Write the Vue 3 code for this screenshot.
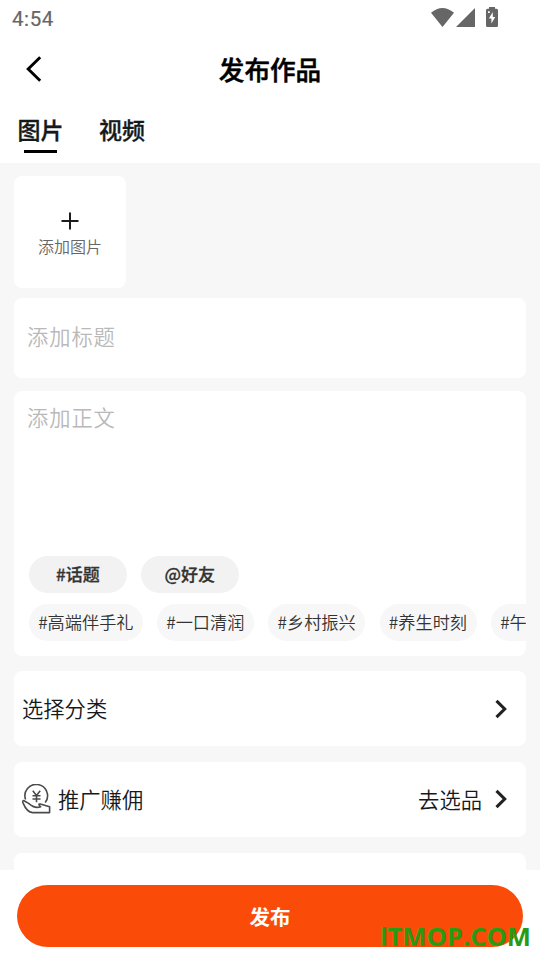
<script setup>
import { ref } from 'vue'

const tabs = ['图片', '视频']
const active = ref(0)
const actions = ['#话题', '@好友']
const topics = ['#高端伴手礼', '#一口清润', '#乡村振兴', '#养生时刻', '#午']
</script>

<template>
  <div class="screen">
    <div class="status">
      <span class="clock">4:54</span>
      <svg class="status-icons" width="70" height="38" viewBox="0 0 70 38">
        <path d="M1 12.800Q12.400 3.400 24 12.800L12.500 27Z" />
        <path d="M45 8V27H26Z" />
        <path fill-rule="evenodd" d="M59 7H65V8.800H66.500Q68 8.800 68 10.300V25.500Q68 27 66.500 27H57.500Q56 27 56 25.500V10.300Q56 8.800 57.500 8.800H59ZM62.800 12L58.900 18.600H61.400V23.500L65.200 17H62.800ZM58 11.200V13H59.800V11.200Z" />
      </svg>
    </div>

    <header class="nav">
      <svg class="back" width="16" height="26" viewBox="0 0 16 26">
        <path d="M14.200 1.200L2.200 13L14.200 24.800" fill="none" stroke="#000" stroke-width="2.900" />
      </svg>
      <h1>发布作品</h1>
    </header>

    <nav class="tabs">
      <button v-for="(t, i) in tabs" :key="t" class="tab" :class="{ active: active === i }" @click="active = i">{{ t }}</button>
    </nav>

    <main class="content">
      <button class="upload">
        <svg width="18" height="18" viewBox="0 0 18 18"><path d="M9 0.500V17.500M0.500 9H17.500" stroke="#1c1c1e" stroke-width="2" /></svg>
        <span>添加图片</span>
      </button>

      <section class="card title-card"><span class="placeholder">添加标题</span></section>

      <section class="card body-card">
        <span class="placeholder">添加正文</span>
        <div class="chips actions">
          <button v-for="a in actions" :key="a" class="chip bold">{{ a }}</button>
        </div>
        <div class="chips">
          <button v-for="t in topics" :key="t" class="chip">{{ t }}</button>
        </div>
      </section>

      <section class="card row">
        <span>选择分类</span>
        <svg class="chevron" width="12" height="20" viewBox="0 0 12 20"><path d="M1.500 1.800L9.700 10L1.500 18.200" fill="none" stroke="#222" stroke-width="3.100" /></svg>
      </section>

      <section class="card row">
        <svg class="coin" width="29" height="30" viewBox="0 0 29 30" fill="none" stroke="#4b4b4b" stroke-width="1.600" stroke-linejoin="round">
          <path d="M3.600 15.600A11.300 11.300 0 1 1 23.200 18.600" />
          <path d="M10.800 6.800L14.500 11.500L18.200 6.800M14.500 11.500V18.200M10.500 11.800H18.500M10.500 15H18.500" />
          <path d="M6.600 19.400L2 16.700C.6 16.200 .5 17.600 1 18.900C3.200 24.200 6 28.400 10.500 28.600H27.600V22.800L18.300 20C16.300 19.600 16.700 21.300 18.600 22.700C14.800 24.300 10 22.400 6.600 19.400Z" />
        </svg>
        <span>推广赚佣</span>
        <span class="select">去选品</span>
        <svg class="chevron" width="12" height="20" viewBox="0 0 12 20"><path d="M1.500 1.800L9.700 10L1.500 18.200" fill="none" stroke="#222" stroke-width="3.100" /></svg>
      </section>

      <section class="card row"></section>
    </main>

    <footer class="footer">
      <button class="publish">发布</button>
      <span class="watermark"><span class="plain">I</span>TMOP.COM</span>
    </footer>
  </div>
</template>

<style>
body {
  margin: 0;
  background: #fff;
}
</style>

<style scoped>
.screen {
  width: 540px;
  height: 960px;
  overflow: hidden;
  display: flex;
  flex-direction: column;
  background: #fff;
  color: #14191c;
  font-family: "Noto Sans CJK SC", sans-serif;
  font-weight: 350;
}
.screen * {
  box-sizing: border-box;
}
button {
  border: 0;
  margin: 0;
  padding: 0;
  color: inherit;
  font: inherit;
}
svg {
  display: block;
  flex: none;
}
.status {
  height: 38px;
  flex: none;
  display: flex;
  justify-content: space-between;
  padding: 0 40px 0 12px;
  color: #666;
}
.clock {
  font: 400 20.500px/38px Roboto, sans-serif;
  letter-spacing: 0.600px;
  -webkit-text-stroke: 0.200px #666;
}
.status-icons {
  fill: #666;
}
.nav {
  height: 62px;
  flex: none;
  display: grid;
  grid-template-columns: 60px 1fr 60px;
  align-items: center;
}
.back {
  margin-left: 26px;
}
h1 {
  margin: 0;
  text-align: center;
  color: #000;
  font-size: 25.6px;
  line-height: 36px;
  font-weight: 500;
  -webkit-text-stroke: 0.500px #000;
}
.tabs {
  height: 63px;
  flex: none;
  display: flex;
  gap: 35.500px;
  padding: 12px 0 0 17.500px;
}
.tab {
  width: 46px;
  height: 42px;
  display: flex;
  flex-direction: column;
  align-items: center;
  background: none;
  font-size: 23px;
  line-height: 34px;
  font-weight: 500;
  -webkit-text-stroke: 0.350px #14191c;
  white-space: nowrap;
}
.tab.active::after {
  content: "";
  width: 33px;
  height: 3px;
  margin-top: 4px;
  background: #000;
}
.content {
  height: 707px;
  flex: none;
  overflow: hidden;
  padding: 13px 14px 0;
  background: #f7f7f7;
}
.upload {
  width: 112px;
  height: 112px;
  display: flex;
  flex-direction: column;
  align-items: center;
  padding-top: 36px;
  border-radius: 8px;
  background: #fff;
  color: #666;
  font-size: 16px;
  line-height: 24px;
}
.upload span {
  margin-top: 4px;
}
.card {
  overflow: hidden;
  border-radius: 8px;
  background: #fff;
}
.title-card {
  height: 79.700px;
  margin-top: 10px;
  padding: 22px 13px;
}
.placeholder {
  display: block;
  color: #b9b9b9;
  font-size: 21.300px;
  line-height: 32px;
  letter-spacing: 0.900px;
}
.body-card {
  height: 265px;
  margin-top: 13px;
  padding: 10px 0 0 13px;
}
.chips {
  display: flex;
  gap: 14.300px;
  margin: 10.700px 0 0 2px;
}
.chips.actions {
  margin-top: 123.300px;
}
.chip {
  flex: none;
  height: 37px;
  padding: 0 9.200px;
  border-radius: 19px;
  background: #f7f7f7;
  color: #333;
  font-size: 17.200px;
  line-height: 36px;
  white-space: nowrap;
  text-align: left;
}
.chips:not(.actions) .chip:not(:first-child) {
  width: 97px;
}
.chip.bold {
  width: 97.700px;
  background: #f2f2f2;
  font-size: 17px;
  font-weight: 500;
  -webkit-text-stroke: 0.300px #333;
  text-align: center;
}
.row {
  height: 74.800px;
  display: flex;
  align-items: center;
  margin-top: 15.800px;
  padding: 0 19px 0 8px;
  font-size: 21.300px;
}
.row span {
  position: relative;
  top: -1px;
}
.chevron {
  margin-left: auto;
}
.coin {
  margin-right: 7px;
}
.select {
  margin-left: auto;
}
.select + .chevron {
  margin-left: 13px;
}
.footer {
  position: relative;
  flex: 1;
  padding: 15px 17px;
}
.publish {
  display: block;
  width: 506px;
  height: 62px;
  border-radius: 31px;
  background: #fb4b08;
  color: #fff;
  font-size: 20.500px;
  line-height: 62px;
  font-weight: 700;
}
.watermark {
  position: absolute;
  right: 9px;
  bottom: 7px;
  color: #289b13;
  font: 700 25.600px/36px "Open Sans", sans-serif;
}
.plain {
  font-family: Inter, sans-serif;
  font-size: 25px;
}
</style>
